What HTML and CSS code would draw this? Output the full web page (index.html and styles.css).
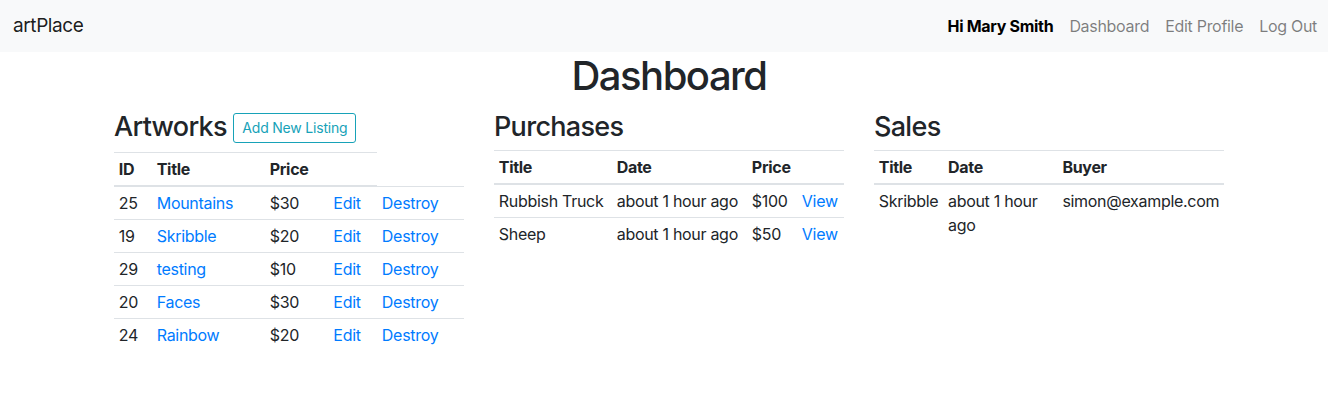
FILE: index.html
```html
<!DOCTYPE html>
<html lang="en">
<head>
<meta charset="utf-8">
<title>artPlace</title>
<link rel="stylesheet" href="styles.css">
</head>
<body>
<nav class="navbar">
  <a class="brand" href="#">artPlace</a>
  <ul class="nav">
    <li class="nav-text">Hi Mary Smith</li>
    <li><a class="nav-link" href="#">Dashboard</a></li>
    <li><a class="nav-link" href="#">Edit Profile</a></li>
    <li><a class="nav-link" href="#">Log Out</a></li>
  </ul>
</nav>
<main class="main">
  <div class="container">
    <h1 class="page-title">Dashboard</h1>
    <div class="row">
      <section class="col">
        <h3 class="section-title section-title--action">Artworks <a class="btn-outline" href="#">Add New Listing</a></h3>
        <table class="table">
          <thead>
            <tr><th>ID</th><th>Title</th><th>Price</th><th></th></tr>
          </thead>
          <tbody>
            <tr><td>25</td><td><a href="#">Mountains</a></td><td>$30</td><td><a href="#">Edit</a></td><td><a href="#">Destroy</a></td></tr>
            <tr><td>19</td><td><a href="#">Skribble</a></td><td>$20</td><td><a href="#">Edit</a></td><td><a href="#">Destroy</a></td></tr>
            <tr><td>29</td><td><a href="#">testing</a></td><td>$10</td><td><a href="#">Edit</a></td><td><a href="#">Destroy</a></td></tr>
            <tr><td>20</td><td><a href="#">Faces</a></td><td>$30</td><td><a href="#">Edit</a></td><td><a href="#">Destroy</a></td></tr>
            <tr><td>24</td><td><a href="#">Rainbow</a></td><td>$20</td><td><a href="#">Edit</a></td><td><a href="#">Destroy</a></td></tr>
          </tbody>
        </table>
      </section>
      <section class="col">
        <h3 class="section-title">Purchases</h3>
        <table class="table">
          <thead>
            <tr><th>Title</th><th>Date</th><th>Price</th><th></th></tr>
          </thead>
          <tbody>
            <tr><td>Rubbish Truck</td><td>about 1 hour ago</td><td>$100</td><td><a href="#">View</a></td></tr>
            <tr><td>Sheep</td><td>about 1 hour ago</td><td>$50</td><td><a href="#">View</a></td></tr>
          </tbody>
        </table>
      </section>
      <section class="col">
        <h3 class="section-title">Sales</h3>
        <table class="table">
          <thead>
            <tr><th>Title</th><th>Date</th><th>Buyer</th></tr>
          </thead>
          <tbody>
            <tr><td>Skribble</td><td>about 1 hour ago</td><td>simon@example.com</td></tr>
          </tbody>
        </table>
      </section>
    </div>
  </div>
</main>
</body>
</html>
```
FILE: styles.css
```css
* { box-sizing: border-box; }
body {
  margin: 0;
  font-family: Inter, "Noto Sans", "Liberation Sans", sans-serif;
  font-size: 16px;
  line-height: 1.5;
  letter-spacing: -0.3px;
  color: #212529;
  background: #fff;
}
a { color: #007bff; text-decoration: none; }

.navbar {
  height: 52px;
  background: #f8f9fa;
  display: flex;
  align-items: center;
  justify-content: space-between;
  padding: 0 3px 0 13px;
}
.brand {
  font-size: 19px;
  letter-spacing: -0.4px;
  color: rgba(0,0,0,.9);
  line-height: 1.5;
}
.nav {
  list-style: none;
  margin: 0;
  padding: 0;
  display: flex;
  align-items: center;
}
.nav-text {
  font-weight: 700;
  color: #000;
  padding: 0 8px;
}
.nav-link {
  display: block;
  padding: 0 8px;
  color: rgba(0,0,0,.5);
}

.main { padding-left: 10px; }
.container {
  width: 1110px;
  margin: 0 auto;
}
.page-title {
  margin: 0 0 8px;
  font-size: 40px;
  font-weight: 500;
  line-height: 1.2;
  letter-spacing: -1.5px;
  text-align: center;
}
.row {
  display: flex;
  gap: 30px;
  align-items: flex-start;
}
.col { width: 350px; flex: none; }
.section-title {
  margin: 2px 0 6px;
  font-size: 27px;
  font-weight: 500;
  line-height: 34px;
  letter-spacing: -0.7px;
}
.section-title--action { margin-bottom: 8px; }
.btn-outline {
  display: inline-block;
  vertical-align: middle;
  font-size: 14px;
  font-weight: 400;
  line-height: 20px;
  letter-spacing: -0.2px;
  padding: 4px 8px;
  border: 1px solid #17a2b8;
  border-radius: 3px;
  color: #17a2b8;
  position: relative;
  top: -1px;
}
.table {
  width: 100%;
  border-collapse: collapse;
  color: #212529;
}
.table th, .table td {
  padding: 4px 4.8px;
  text-align: left;
  vertical-align: top;
  border-top: 1px solid #dee2e6;
}
.table thead th {
  vertical-align: bottom;
  border-bottom: 2px solid #dee2e6;
  font-weight: 700;
}
```
